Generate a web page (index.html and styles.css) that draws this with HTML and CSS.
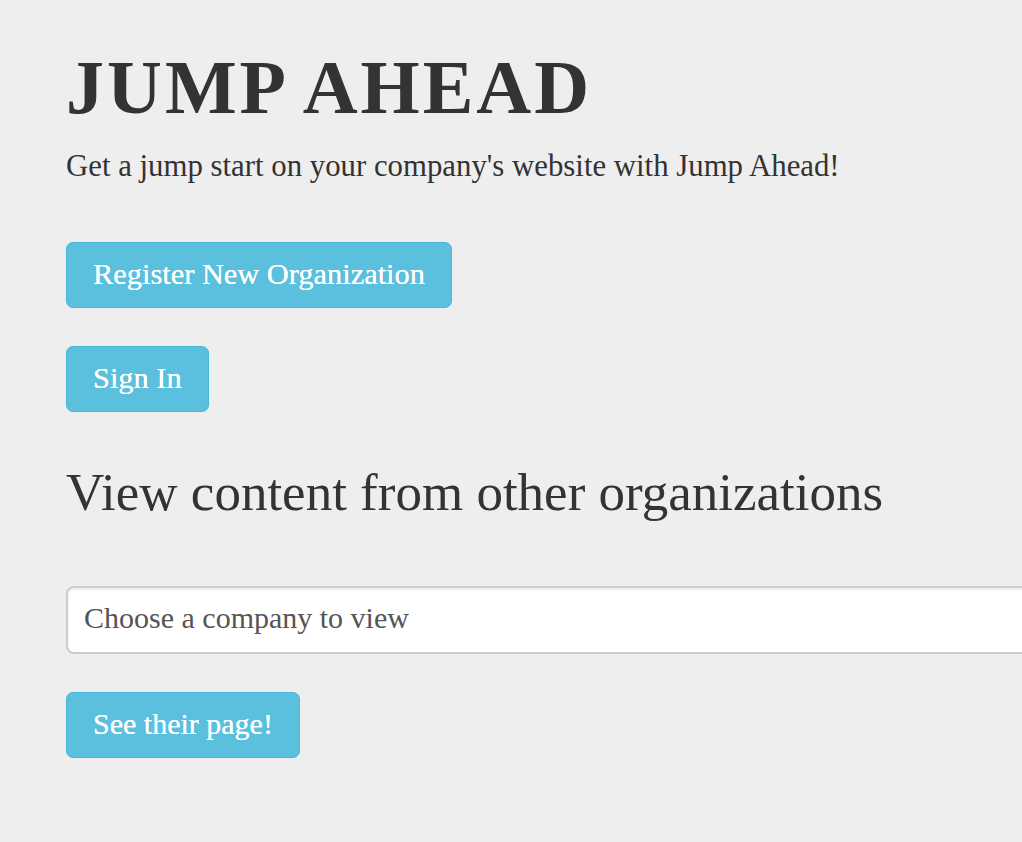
FILE: index.html
```html
<!DOCTYPE html>
<html>
<head>
<meta charset="utf-8">
<title>Jump Ahead</title>
<link rel="stylesheet" href="styles.css">
</head>
<body>
<div class="container">
  <h1 class="title">JUMP AHEAD</h1>
  <p class="lead">Get a jump start on your company's website with Jump Ahead!</p>
  <div class="actions">
    <a class="btn" href="#">Register New Organization</a>
    <a class="btn btn-next" href="#">Sign In</a>
  </div>
  <h2 class="subtitle">View content from other organizations</h2>
  <form class="view-form">
    <div class="select-wrap">
      <select class="company-select">
        <option>Choose a company to view</option>
      </select>
    </div>
    <button type="button" class="btn btn-submit">See their page!</button>
  </form>
</div>
</body>
</html>
```
FILE: styles.css
```css
html, body {
  margin: 0;
  padding: 0;
  background: #eeeeee;
  overflow: hidden;
}

body {
  font-family: "Liberation Serif", "Times New Roman", serif;
  color: #333333;
}

.container {
  padding: 43px 0 0 66px;
  overflow: hidden;
}

.title {
  margin: 0;
  font-size: 76px;
  line-height: 88px;
  letter-spacing: 3px;
  font-weight: bold;
  color: #333333;
}

.lead {
  margin: 15px 0 0;
  font-size: 30.8px;
  line-height: 40px;
  color: #333333;
}

.actions {
  margin-top: 56px;
  display: flex;
  flex-direction: column;
  align-items: flex-start;
  gap: 38px;
}

.btn {
  display: inline-block;
  box-sizing: border-box;
  height: 66px;
  padding: 11px 26px 13px;
  font-family: "Liberation Serif", "Times New Roman", serif;
  font-size: 30.4px;
  line-height: 40px;
  color: #ffffff;
  text-decoration: none;
  background: #5bc0de;
  border: 1px solid #46b8da;
  border-radius: 7px;
  cursor: pointer;
  white-space: nowrap;
  text-shadow: 0 0 0.4px #ffffff;
}

.subtitle {
  margin: 50px 0 0;
  font-size: 53px;
  line-height: 60px;
  font-weight: normal;
  color: #333333;
}

.view-form {
  margin-top: 64px;
  display: flex;
  flex-direction: column;
  align-items: flex-start;
  gap: 38px;
}

.select-wrap {
  align-self: stretch;
}

.company-select {
  appearance: none;
  -webkit-appearance: none;
  display: block;
  box-sizing: border-box;
  width: calc(100% + 40px);
  height: 68px;
  padding: 0 16px 5px;
  font-family: "Liberation Serif", "Times New Roman", serif;
  font-size: 30px;
  color: #555555;
  background: #ffffff;
  border: 2px solid #cccccc;
  border-radius: 8px;
  box-shadow: inset 0 2px 2px rgba(0, 0, 0, 0.075);
  outline: none;
}

.btn-submit {
  font-size: 30px;
}
```
